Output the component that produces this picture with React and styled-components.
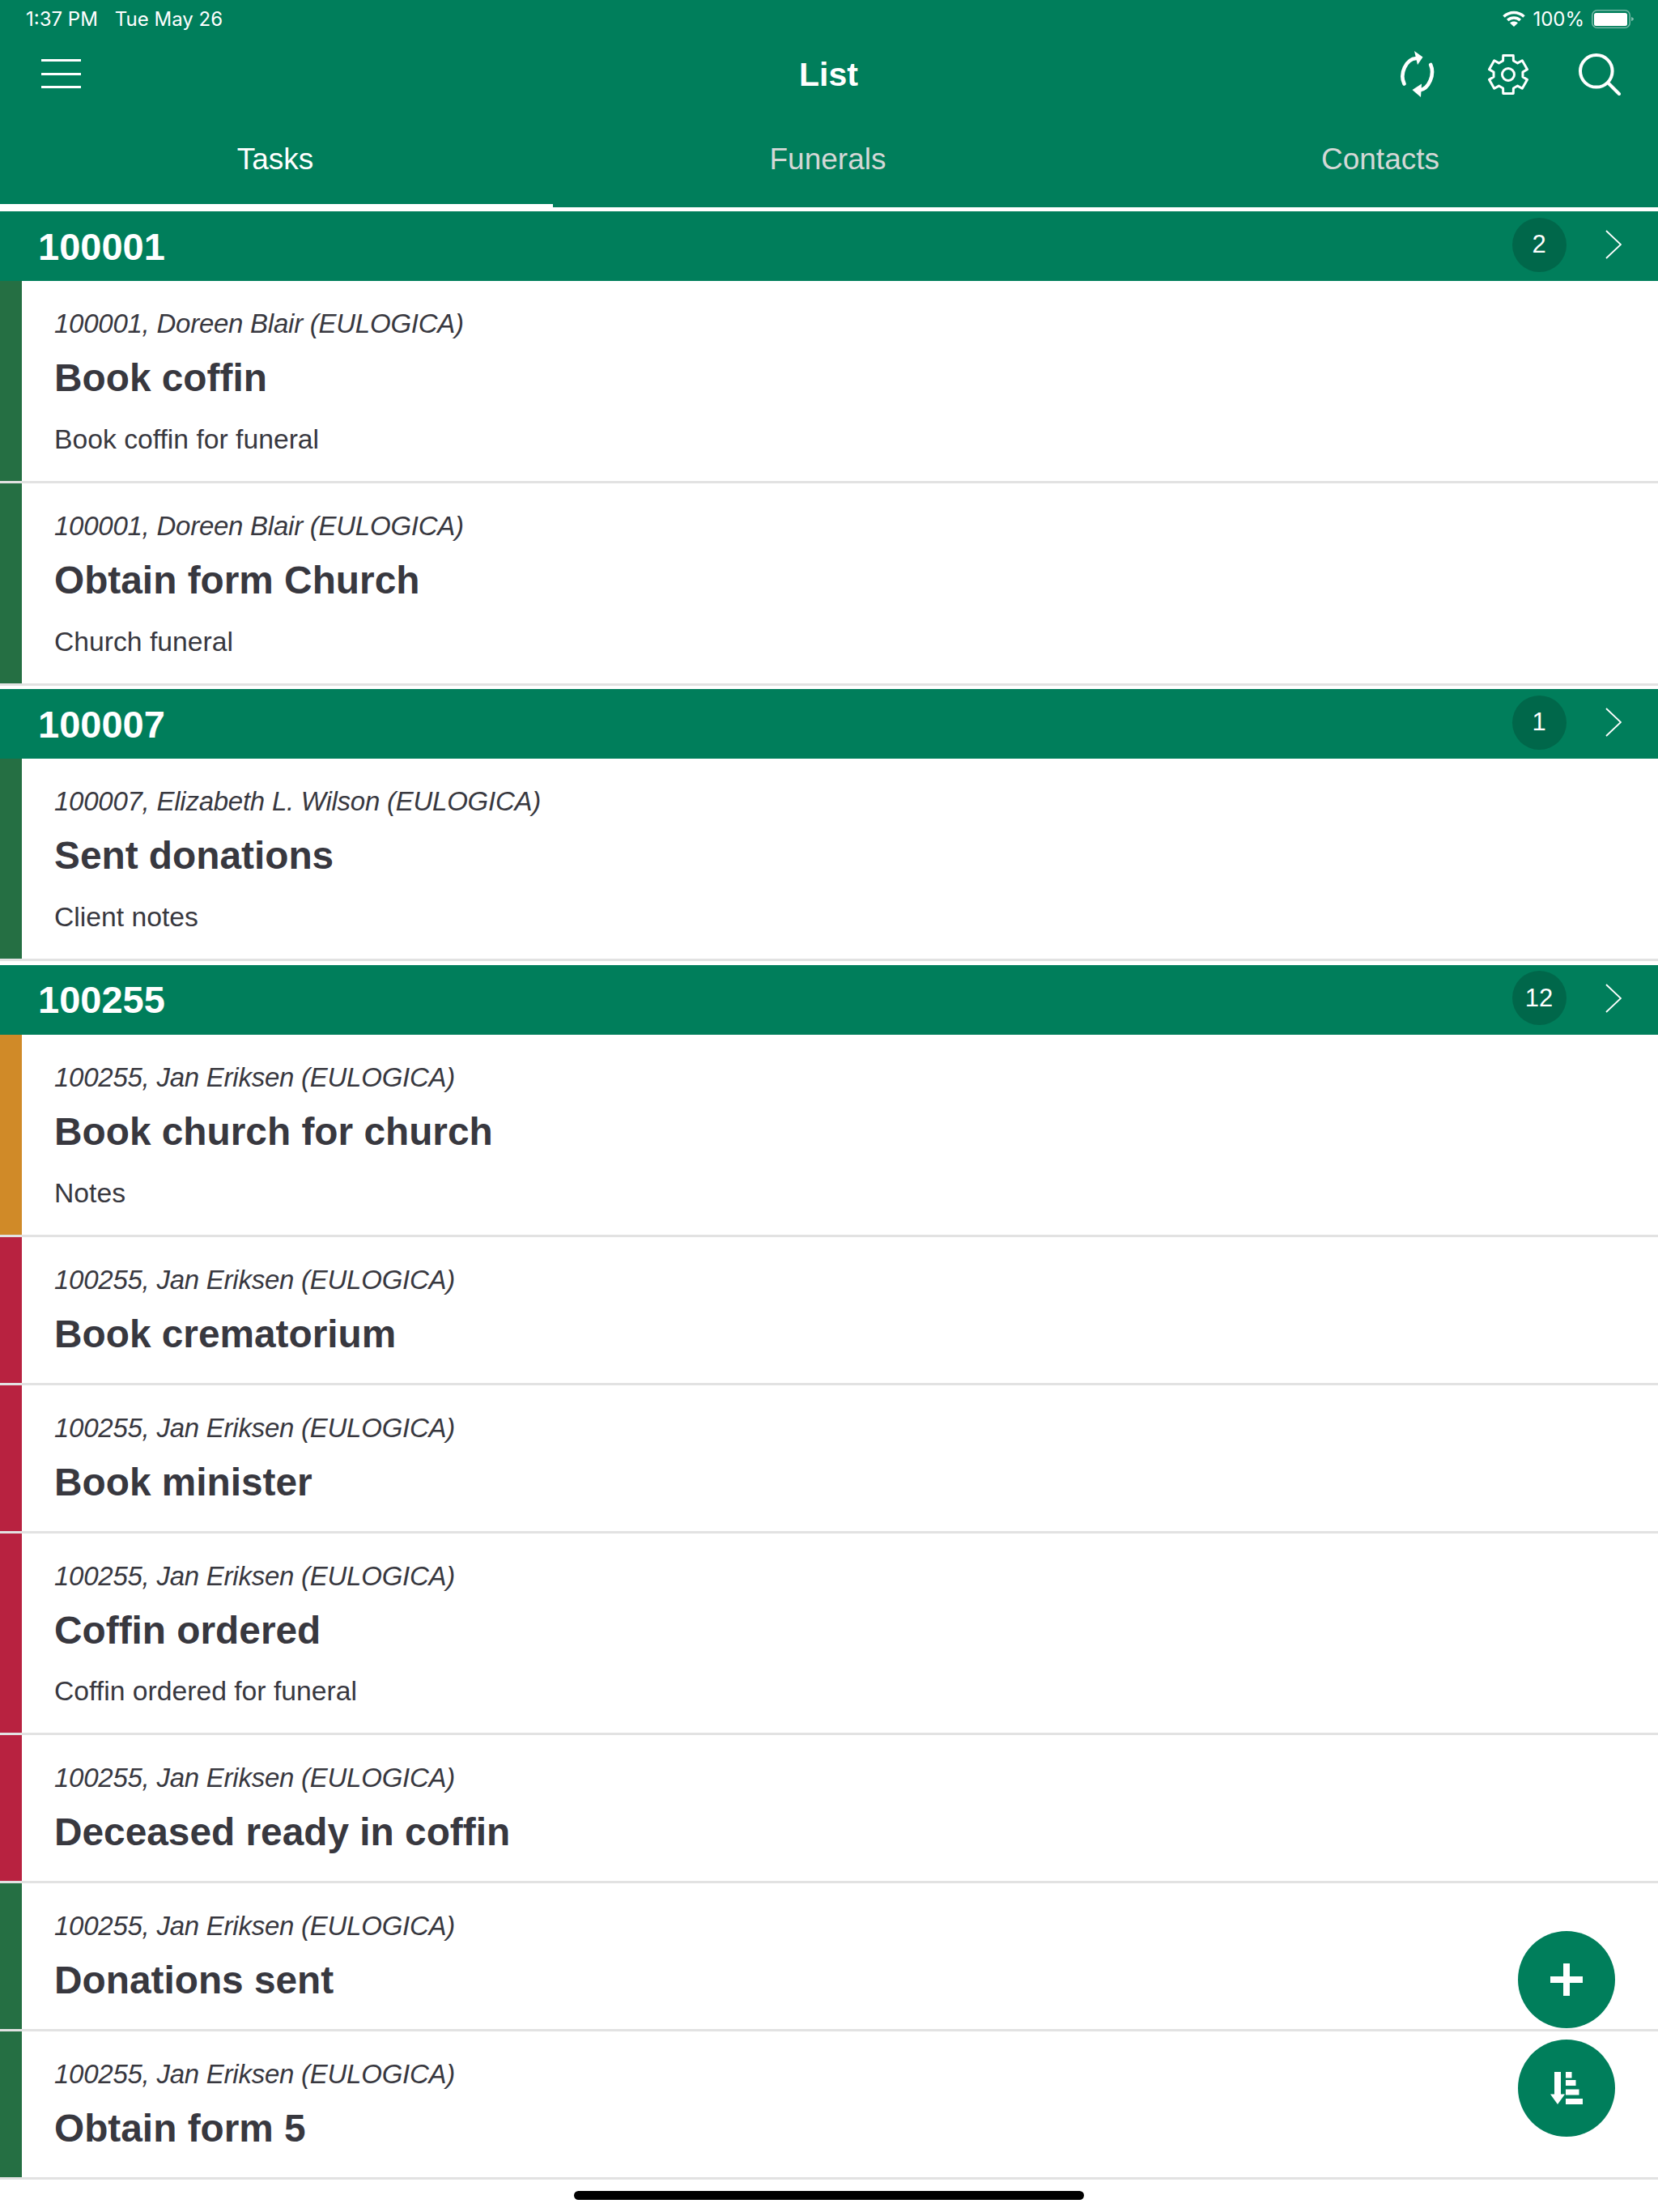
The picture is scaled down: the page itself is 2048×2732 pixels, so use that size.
import React from "react";
import styled, { createGlobalStyle } from "styled-components";

const GREEN = "#007e5b";
const TEXT = "#38383f";

const Global = createGlobalStyle`
  html, body { margin: 0; padding: 0; background: #fff; }
  * { box-sizing: border-box; }
  #root { width: 2048px; height: 2732px; }
`;

const Page = styled.div`
  position: relative;
  width: 2048px;
  height: 2732px;
  overflow: hidden;
  background: #fff;
  font-family: "Liberation Sans", Arial, sans-serif;
  color: ${TEXT};
`;

const Top = styled.header`
  background: ${GREEN};
  color: #fff;
`;

const StatusBar = styled.div`
  height: 46px;
  padding: 0 30px 0 32px;
  display: flex;
  align-items: center;
  justify-content: space-between;
  font-family: Inter, "Liberation Sans", sans-serif;
  font-size: 24px;
`;

const StatusGroup = styled.div`
  display: flex;
  align-items: center;
  gap: ${(p) => p.$gap}px;
`;

const Toolbar = styled.div`
  height: 92px;
  padding: 0 46px 0 45px;
  display: grid;
  grid-template-columns: 1fr auto 1fr;
  align-items: center;
`;

const Burger = styled.div`
  width: 49px;
  margin: 0 0 2px 6px;
  display: flex;
  flex-direction: column;
  gap: 13.5px;
`;

const BurgerLine = styled.span`
  height: 3px;
  background: #fff;
`;

const Title = styled.h1`
  margin: 0;
  font-size: 41px;
  font-weight: 700;
  line-height: 46px;
`;

const ToolActions = styled.div`
  justify-self: end;
  display: flex;
  align-items: center;
  gap: 61px;
`;

const SyncSlot = styled.div`
  display: flex;
  margin-right: 3px;
`;

const Tabs = styled.nav`
  display: grid;
  grid-template-columns: 683px 682px 683px;
  height: 123px;
`;

const Tab = styled.div`
  padding: 39px 3px 0 0;
  height: 123px;
  text-align: center;
  font-size: 37px;
  line-height: 40px;
  color: ${(p) => (p.$active ? "#ffffff" : "#d4d8d6")};
  border-bottom: ${(p) => (p.$active ? 9 : 5)}px solid #fff;
`;

const GroupHeader = styled.div`
  height: 86px;
  margin-top: ${(p) => (p.$first ? 0 : 4.8)}px;
  padding: 0 45px 4px 47px;
  display: flex;
  align-items: center;
  background: ${GREEN};
  color: #fff;
`;

const GroupName = styled.div`
  flex: 1;
  font-size: 47px;
  font-weight: 700;
  padding-top: 4px;
`;

const Badge = styled.div`
  width: 67px;
  height: 67px;
  padding-right: 1px;
  border-radius: 50%;
  background: #00674a;
  display: flex;
  align-items: center;
  justify-content: center;
  font-size: 31px;
  margin-right: 48px;
`;

const Row = styled.article`
  display: flex;
  border-bottom: 3px solid #e2e2e2;
`;

const Stripe = styled.div`
  width: 27px;
  flex: none;
  background: ${(p) => p.$color};
`;

const RowBody = styled.div`
  padding: 32px 0 31.9px 40px;
`;

const Meta = styled.div`
  padding-top: 1px;
  font-size: 33px;
  line-height: 39px;
  letter-spacing: -0.25px;
  font-style: italic;
`;

const TaskTitle = styled.div`
  margin-top: 20px;
  font-size: 47.8px;
  line-height: 56px;
  font-weight: 700;
`;

const Note = styled.div`
  margin-top: 26.9px;
  font-size: 33.7px;
  line-height: 40px;
`;

const FabStack = styled.div`
  position: absolute;
  top: 2385px;
  right: 53px;
  display: flex;
  flex-direction: column;
  gap: 14px;
`;

const Fab = styled.div`
  width: 120px;
  height: 120px;
  border-radius: 50%;
  background: ${GREEN};
  display: flex;
  align-items: center;
  justify-content: center;
`;

const HomeBar = styled.div`
  position: absolute;
  left: 709px;
  top: 2706px;
  width: 630px;
  height: 11px;
  border-radius: 5.5px;
  background: #000;
`;

const Wifi = () => (
  <svg width="28" height="20" viewBox="0 0 28 20" fill="none" stroke="#fff" strokeWidth="3.6">
    <path d="M1.5 7.5C8.5 .8 19.5 .8 26.5 7.5" />
    <path d="M6.2 12C10.5 8 17.5 8 21.8 12" />
    <path d="M14 20l-5-4.8c2.8-2.4 7.2-2.4 10 0z" fill="#fff" stroke="none" />
  </svg>
);

const Battery = () => (
  <svg width="52" height="23" viewBox="0 0 52 23" fill="none">
    <rect x=".8" y=".8" width="46.4" height="21.4" rx="6" stroke="#fff" strokeOpacity=".45" strokeWidth="1.6" />
    <rect x="3" y="4" width="41" height="16" rx="2.5" fill="#fff" />
    <path d="M49 9c1.6.4 3 1.5 3 2.5S50.6 13.6 49 14z" fill="#fff" fillOpacity=".5" />
  </svg>
);

const Sync = () => (
  <svg width="44" height="58" viewBox="0 0 44 58" fill="none" stroke="#fff" strokeWidth="4.6" strokeLinecap="round">
    <path d="M5.5 40.5C-.5 28 7.5 10 20.5 9" />
    <path d="M38.2 17C43.5 29 36 47 24.5 48.5" />
    <path d="M18 0L28.5 7.5 22 17z" fill="#fff" stroke="none" />
    <path d="M27 40.5L15.5 48 26 57z" fill="#fff" stroke="none" />
  </svg>
);

const gearPath = (() => {
  const cx = 26, cy = 26, ro = 24.4, ri = 18.2;
  let d = "";
  const pt = (r, a) => `${(cx + r * Math.sin(a)).toFixed(2)} ${(cy - r * Math.cos(a)).toFixed(2)}`;
  for (let i = 0; i < 6; i++) {
    const a = (i * Math.PI) / 3;
    const t = 0.26, b = 0.36;
    d += `${i === 0 ? "M" : "L"}${pt(ri, a - b)}L${pt(ro, a - t)}L${pt(ro, a + t)}L${pt(ri, a + b)}`;
  }
  return d + "Z";
})();

const Gear = () => (
  <svg width="52" height="52" viewBox="0 0 52 52" fill="none" stroke="#fff" strokeWidth="3" strokeLinejoin="round">
    <path d={gearPath} />
    <circle cx="26" cy="26" r="7.5" />
  </svg>
);

const Search = () => (
  <svg width="52" height="52" viewBox="0 0 52 52" fill="none" stroke="#fff" strokeWidth="4" strokeLinecap="round">
    <circle cx="21.8" cy="21.8" r="19.8" />
    <path d="M36.5 36.5L50 50" />
  </svg>
);

const Chevron = () => (
  <svg width="20" height="36" viewBox="0 0 20 36" fill="none" stroke="#fff" strokeWidth="1.8">
    <path d="M1 1l18 17L1 35" />
  </svg>
);

const Plus = () => (
  <svg width="40" height="40" viewBox="0 0 40 40" fill="#fff">
    <path d="M16 0h8v16h16v8H24v16h-8V24H0v-8h16z" />
  </svg>
);

const Sort = () => (
  <svg width="40" height="40" viewBox="0 0 40 40" fill="#fff">
    <path d="M5 0h8v27.5h5L9 40 0 27.5h5z" />
    <rect x="19" y="0" width="7.5" height="7.5" />
    <rect x="19" y="10" width="12.5" height="7" />
    <rect x="19" y="21.5" width="16.5" height="7" />
    <rect x="19" y="33" width="21" height="7" />
  </svg>
);

const G = "#256f43";
const O = "#d08a28";
const R = "#b82240";

const d = "100001, Doreen Blair (EULOGICA)";
const e = "100007, Elizabeth L. Wilson (EULOGICA)";
const j = "100255, Jan Eriksen (EULOGICA)";

const groups = [
  {
    id: "100001",
    count: 2,
    rows: [
      { c: G, m: d, t: "Book coffin", n: "Book coffin for funeral" },
      { c: G, m: d, t: "Obtain form Church", n: "Church funeral" },
    ],
  },
  { id: "100007", count: 1, rows: [{ c: G, m: e, t: "Sent donations", n: "Client notes" }] },
  {
    id: "100255",
    count: 12,
    rows: [
      { c: O, m: j, t: "Book church for church", n: "Notes" },
      { c: R, m: j, t: "Book crematorium" },
      { c: R, m: j, t: "Book minister" },
      { c: R, m: j, t: "Coffin ordered", n: "Coffin ordered for funeral" },
      { c: R, m: j, t: "Deceased ready in coffin" },
      { c: G, m: j, t: "Donations sent" },
      { c: G, m: j, t: "Obtain form 5" },
    ],
  },
];

export default function App() {
  return (
    <Page>
      <Global />
      <Top>
        <StatusBar>
          <StatusGroup $gap={21}>
            <span>1:37 PM</span>
            <span>Tue May 26</span>
          </StatusGroup>
          <StatusGroup $gap={9}>
            <Wifi />
            <span>100%</span>
            <Battery />
          </StatusGroup>
        </StatusBar>
        <Toolbar>
          <Burger>
            <BurgerLine />
            <BurgerLine />
            <BurgerLine />
          </Burger>
          <Title>List</Title>
          <ToolActions>
            <SyncSlot><Sync /></SyncSlot>
            <Gear />
            <Search />
          </ToolActions>
        </Toolbar>
        <Tabs>
          <Tab $active>Tasks</Tab>
          <Tab>Funerals</Tab>
          <Tab>Contacts</Tab>
        </Tabs>
      </Top>
      <main>
        {groups.map((g, i) => (
          <section key={g.id}>
            <GroupHeader $first={i === 0}>
              <GroupName>{g.id}</GroupName>
              <Badge>{g.count}</Badge>
              <Chevron />
            </GroupHeader>
            {g.rows.map((r) => (
              <Row key={r.t}>
                <Stripe $color={r.c} />
                <RowBody>
                  <Meta>{r.m}</Meta>
                  <TaskTitle>{r.t}</TaskTitle>
                  {r.n && <Note>{r.n}</Note>}
                </RowBody>
              </Row>
            ))}
          </section>
        ))}
      </main>
      <FabStack>
        <Fab><Plus /></Fab>
        <Fab><Sort /></Fab>
      </FabStack>
      <HomeBar />
    </Page>
  );
}
